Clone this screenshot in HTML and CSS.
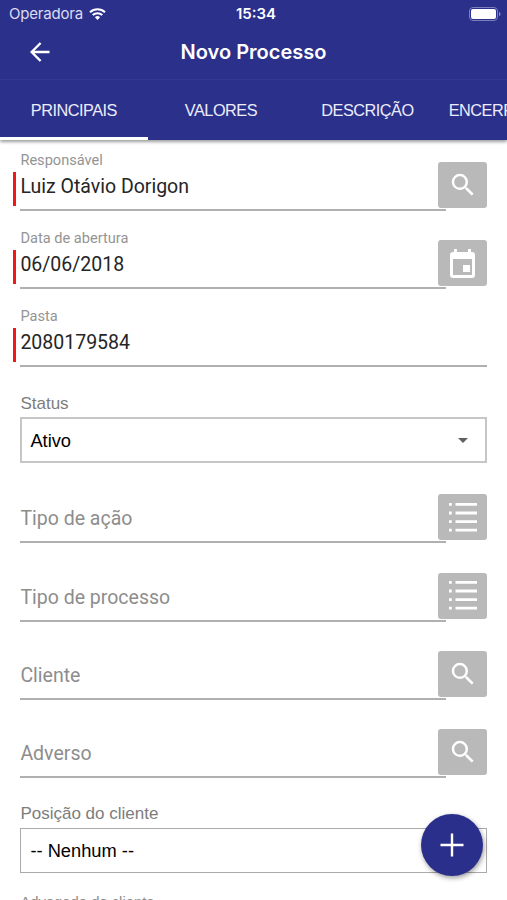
FILE: index.html
```html
<!DOCTYPE html>
<html lang="pt-BR">
<head>
<meta charset="utf-8">
<title>Novo Processo</title>
<link rel="stylesheet" href="styles.css">
</head>
<body>
<svg class="defs" width="0" height="0" aria-hidden="true">
  <symbol id="search" viewBox="0 0 24 24"><path d="M15.5 14h-.79l-.28-.27A6.471 6.471 0 0 0 16 9.5 6.5 6.5 0 1 0 9.5 16c1.61 0 3.09-.59 4.23-1.57l.27.28v.79l5 4.99L20.49 19l-4.99-5zm-6 0C7.01 14 5 11.99 5 9.5S7.01 5 9.5 5 14 7.01 14 9.5 11.99 14 9.5 14z"/></symbol>
  <symbol id="list" viewBox="0 0 28 29"><path d="M0 0h2.8v2.8H0zM6.5 0H28v2.8H6.5zM0 8.6h2.8v2.8H0zM6.5 8.6H28v2.8H6.5zM0 17.2h2.8V20H0zM6.5 17.2H28V20H6.5zM0 25.8h2.8v2.8H0zM6.5 25.8H28v2.8H6.5z"/></symbol>
</svg>
<header class="header">
  <div class="status">
    <span class="carrier">Operadora</span>
    <svg class="wifi" viewBox="0 0 17 12"><path d="M1 4.3a10.8 10.8 0 0 1 15 0M3.7 7.1a7 7 0 0 1 9.6 0" fill="none" stroke="currentColor" stroke-width="2"/><path d="M5.9 9.2a3.8 3.8 0 0 1 5.2 0L8.5 12z" fill="currentColor"/></svg>
    <span class="clock">15:34</span>
    <svg class="battery" viewBox="0 0 32 14"><rect x=".5" y=".5" width="28" height="13" rx="3.5" fill="none" stroke="#7c7fba"/><rect x="2" y="2" width="25" height="10" rx="2" fill="#fff"/><path d="M30 5v4q1.6-.6 1.6-2T30 5z" fill="#8d8fc4"/></svg>
  </div>
  <div class="nav">
    <svg class="back" viewBox="0 0 20 20"><path d="M19.5 10H1.8M10.6 1 1.6 10l9 9" fill="none" stroke="currentColor" stroke-width="2.4"/></svg>
    <h1 class="title">Novo Processo</h1>
  </div>
  <nav class="tabs">
    <span class="tab active">PRINCIPAIS</span>
    <span class="tab">VALORES</span>
    <span class="tab">DESCRIÇÃO</span>
    <span class="tab">ENCERRAMENTO</span>
  </nav>
</header>
<main class="form">
  <div class="field required">
    <div class="input"><span class="label">Responsável</span><span class="value">Luiz Otávio Dorigon</span></div>
    <span class="button"><svg class="icon-search"><use href="#search"/></svg></span>
  </div>
  <div class="field required">
    <div class="input"><span class="label">Data de abertura</span><span class="value">06/06/2018</span></div>
    <span class="button"><svg class="icon-date" viewBox="0 0 25 29"><path fill-rule="evenodd" d="M4 0h3v3h11V0h3v3h1a3 3 0 0 1 3 3v20a3 3 0 0 1-3 3H3a3 3 0 0 1-3-3V6a3 3 0 0 1 3-3h1zM3 10v16h19V10z"/><path d="M13 16h7v7h-7z"/></svg></span>
  </div>
  <div class="field required full">
    <div class="input"><span class="label">Pasta</span><span class="value">2080179584</span></div>
  </div>
  <div class="choice">
    <span class="caption">Status</span>
    <div class="select"><span>Ativo</span><i class="caret"></i></div>
  </div>
  <div class="field">
    <div class="input"><span class="placeholder">Tipo de ação</span></div>
    <span class="button"><svg class="icon-list"><use href="#list"/></svg></span>
  </div>
  <div class="field">
    <div class="input"><span class="placeholder">Tipo de processo</span></div>
    <span class="button"><svg class="icon-list"><use href="#list"/></svg></span>
  </div>
  <div class="field">
    <div class="input"><span class="placeholder">Cliente</span></div>
    <span class="button"><svg class="icon-search"><use href="#search"/></svg></span>
  </div>
  <div class="field">
    <div class="input"><span class="placeholder">Adverso</span></div>
    <span class="button"><svg class="icon-search"><use href="#search"/></svg></span>
  </div>
  <div class="choice last">
    <span class="caption">Posição do cliente</span>
    <div class="select"><span>-- Nenhum --</span><i class="caret"></i></div>
  </div>
  <div class="next">Advogado do cliente</div>
</main>
<div class="fab"><svg viewBox="0 0 24 24"><path d="M12 .5v23M.5 12h23" stroke="#fff" stroke-width="2.4"/></svg></div>
</body>
</html>
```

FILE: styles.css
```css
* { box-sizing: border-box; }
body {
  margin: 0;
  width: 507px;
  height: 900px;
  overflow: hidden;
  position: relative;
  background: #fff;
  font-family: Roboto, sans-serif;
}
.defs { display: none; }
svg { display: block; flex: none; }
.header {
  height: 140px;
  background: #2b308b;
  color: #fff;
  box-shadow: 0 2px 3px rgba(0, 0, 0, .38);
}
.status {
  display: grid;
  grid-template-columns: auto 18px 1fr 32px;
  align-items: center;
  height: 27px;
  padding: 0 6px 0 9px;
}
.carrier {
  font: 15px/28px Inter, sans-serif;
  color: #dcdcf2;
  width: 80px;
  white-space: nowrap;
  letter-spacing: -.2px;
}
.wifi { width: 17px; height: 12px; }
.clock {
  font: 600 15px/28px Inter, sans-serif;
  text-align: center;
  margin-left: -64px;
}
.battery { width: 32px; height: 14px; }
.nav {
  display: grid;
  grid-template-columns: 80px 1fr 80px;
  align-items: center;
  height: 53px;
  padding-bottom: 2px;
  border-bottom: 1px solid #34398f;
}
.back { width: 20px; height: 20px; margin-left: 30px; margin-bottom: 1px; }
.title {
  margin: 0;
  text-align: center;
  font: 600 20px/49px Inter, sans-serif;
}
.tabs { display: flex; height: 60px; overflow: hidden; }
.tab {
  flex: none;
  width: 146.5px;
  text-align: center;
  font: 16.3px/61px "Liberation Sans", sans-serif;
  letter-spacing: -.5px;
  color: #ececfa;
}
.tab.active { width: 147.7px; border-bottom: 3px solid #fff; }
.tab:last-child { padding-left: 8px; text-align: left; }
.form { padding: 7px 20px 0 20.4px; }
.field {
  display: flex;
  height: 64px;
  margin-bottom: 14.1px;
}
.input {
  position: relative;
  width: 426px;
  border-bottom: 2px solid #b0b0b0;
}
.full .input { width: 467px; }
.required .input::before {
  content: "";
  position: absolute;
  left: -7px;
  top: 25px;
  width: 2.6px;
  height: 34px;
  background: #f01818;
}
.label, .value, .placeholder { display: block; white-space: nowrap; }
.label { font-size: 14.6px; line-height: 26px; color: #949494; }
.value { font-size: 19.5px; line-height: 27px; color: #252525; }
.placeholder { padding-top: 25px; font-size: 19.5px; line-height: 29px; color: #8d8d8d; }
.button {
  position: relative;
  display: grid;
  place-items: center;
  width: 49px;
  height: 46px;
  margin: 15px 0 0 -8px;
  border-radius: 3px;
  background: #b9b9b9;
}
.button svg { fill: #fff; }
.icon-search { width: 30px; height: 30px; }
.icon-date { width: 25px; height: 29px; }
.icon-list { width: 28px; height: 29px; }
.choice {
  margin-top: 23.9px;
  height: 88.4px;
  font-family: "Liberation Sans", sans-serif;
}
.caption { display: block; font-size: 17px; line-height: 26px; color: #7d7d7d; }
.select {
  display: flex;
  align-items: center;
  justify-content: space-between;
  width: 467px;
  height: 46px;
  padding: 1px 17px 0 8px;
  border: 2px solid #c6c6c6;
  font-size: 18.3px;
  color: #000;
}
.caret {
  border: 5px solid transparent;
  border-top-color: #606060;
  border-bottom: 0;
}
.last { margin-top: 23.6px; height: 87px; }
.last .select { border: 1px solid #aaa; padding-left: 9px; height: 45px; margin-top: 1px; }
.next {
  margin-top: 1.5px;
  font: 14.8px/25px "Liberation Sans", sans-serif;
  color: #8d8d8d;
}
.fab {
  position: absolute;
  left: 421px;
  top: 814px;
  display: grid;
  place-items: center;
  width: 62px;
  height: 62px;
  border-radius: 50%;
  background: #2a2f8c;
  box-shadow: 1px 2px 5px rgba(0, 0, 0, .4);
}
.fab svg { width: 24px; height: 24px; }
```
